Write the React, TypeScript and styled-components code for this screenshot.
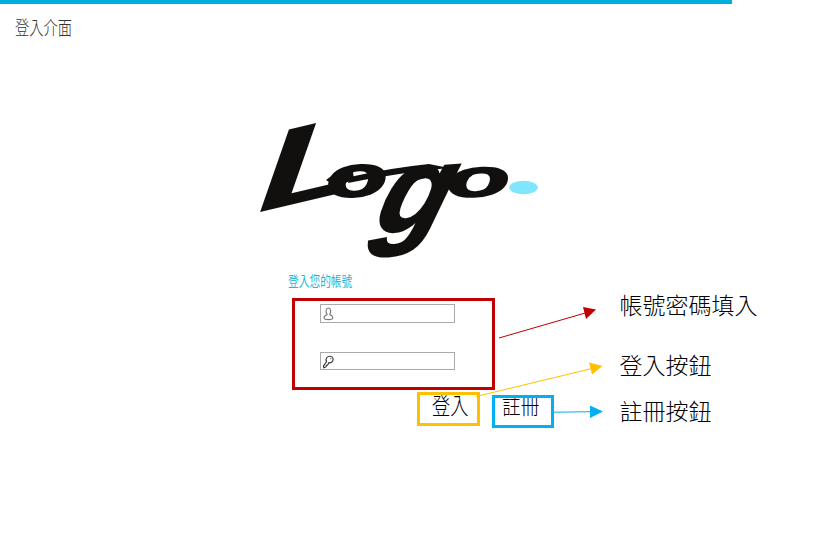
import React from 'react';
import styled, { createGlobalStyle } from 'styled-components';

const GlobalStyle = createGlobalStyle`
  * { box-sizing: border-box; }
  body { margin: 0; background: #fff; overflow: hidden; }
`;

const Page = styled.main`
  position: relative;
  width: 823px;
  height: 560px;
  background: #fff;
  color: #000;
  font-family: "Noto Sans CJK TC", sans-serif;
  font-weight: 300;
`;

const TopBar = styled.div`
  width: 732px;
  height: 4px;
  background: #00aedb;
`;

const Line = styled.span<{ $size: number; $squeeze: number }>`
  display: block;
  width: max-content;
  margin: 0;
  font-size: ${p => p.$size}px;
  font-weight: inherit;
  line-height: 24px;
  white-space: nowrap;
  transform: scaleX(${p => p.$squeeze});
  transform-origin: 0 50%;
`;

const Header = styled.header`
  height: 116px;
  padding: 11px 0 0 15px;
  color: #333;
`;

const Logo = styled.svg`
  display: block;
  width: 290px;
  height: 146px;
  margin-left: 255px;
  overflow: visible;
`;

const Content = styled.div`
  display: flex;
  align-items: flex-start;
`;

const LoginPanel = styled.section`
  width: 619.5px;
  padding: 3px 0 0 287.5px;
`;

const Prompt = styled.div`
  height: 29px;
  color: #20b7dc;
  font-weight: 400;

  ${Line} { line-height: 22px; }
`;

const FieldGroup = styled.div`
  display: flex;
  flex-direction: column;
  gap: 29px;
  width: 203px;
  height: 92px;
  margin-left: 4.5px;
  padding: 3px 0 0 25px;
  border: 3px solid #c00000;
`;

const Field = styled.label`
  display: flex;
  align-items: center;
  flex: none;
  width: 135px;
  height: 18.5px;
  padding-left: 1px;
  border: 1px solid #aaa;
`;

const FieldIcon = styled.svg`
  flex: none;
  width: 13px;
  height: 14px;
  margin-top: 2px;
  fill: none;
  stroke-width: 1.1;
`;

const Input = styled.input`
  width: 110px;
  height: 14px;
  padding: 0;
  border: 0;
  outline: 0;
  background: transparent;
`;

const Actions = styled.div`
  display: flex;
  gap: 12px;
  margin: 2px 0 0 129.5px;
`;

const ActionButton = styled.button<{ $color: string; $top: number; $width: number; $height: number; $left: number; $lift: number }>`
  position: relative;
  display: flex;
  align-items: flex-start;
  flex: none;
  width: ${p => p.$width}px;
  height: ${p => p.$height}px;
  margin: ${p => p.$top}px 0 0;
  padding: 0 0 0 ${p => p.$left}px;
  border: 0;
  background: none;
  color: #000;
  font: inherit;

  ${Line} { margin-top: -${p => p.$lift}px; }

  &::after {
    content: "";
    position: absolute;
    inset: 0;
    border: 3px solid ${p => p.$color};
  }
`;

const Notes = styled.aside`
  display: flex;
  flex-direction: column;
  padding-top: 26px;
`;

const Note = styled.div<{ $height: number }>`
  height: ${p => p.$height}px;
`;

const Arrows = styled.svg`
  position: absolute;
  left: 0;
  top: 0;
  width: 823px;
  height: 560px;
  pointer-events: none;
`;

const LogoMark = () => (
  <Logo viewBox="255 120 290 146" role="img" aria-label="Logo" fill="#11100e">
    <g fontFamily="Liberation Sans" fontStyle="italic" fontWeight="700" fontSize="100">
      <text fontFamily="Lato" fontWeight="700" transform="matrix(2.1 -0.5 -0.14 1.08 252 214)">L</text>
      <text stroke="#11100e" strokeWidth="3" transform="matrix(1 -0.04 0.02 0.58 327 197.5)">o</text>
      <text stroke="#11100e" strokeWidth="2" transform="matrix(1.16 -0.08 -0.36 1.2 372 233)">g</text>
      <text stroke="#11100e" strokeWidth="3" transform="matrix(1.04 -0.04 0.02 0.53 447 197.5)">o</text>
    </g>
    <path d="M326 180Q338 170 352 166L354 179L337 187Z" />
    <path d="M350 177Q390 168 429 164L449 168L420 171Q377 177 348 183Z" />
    <path d="M443 182Q456 174 473 170L472 176Q460 179 446 187Z" />
    <ellipse cx="523.5" cy="187.5" rx="14.3" ry="6.8" fill="#80e5ff" />
  </Logo>
);

export default function App() {
  return (
    <>
      <GlobalStyle />
      <Page>
        <TopBar />
        <Header><Line as="h1" $size={19} $squeeze={0.75}>登入介面</Line></Header>
        <LogoMark />
        <Content>
          <LoginPanel>
            <Prompt><Line $size={14} $squeeze={0.765}>登入您的帳號</Line></Prompt>
            <FieldGroup>
              <Field>
                <FieldIcon viewBox="0 0 13 14" stroke="#777">
                  <path d="M5 6.8C3.4 5.2 3.8 1 6.4 1S9.4 5.2 7.8 6.8V7.8C9.6 8.3 10.8 9.5 10.8 11C10.8 13.1 2 13.1 2 11C2 9.5 3.2 8.3 5 7.8Z" />
                </FieldIcon>
                <Input aria-label="帳號" />
              </Field>
              <Field>
                <FieldIcon viewBox="0 0 13 14" stroke="#333">
                  <path d="M4.6 6.5C3 3.5 5.2 1.2 8 1.2C10.6 1.2 11.8 3.6 10.8 5.8C10 7.7 8.2 8 6.8 7.7L5.6 10L4.4 10.5L4 11.8L1.8 12.8L1.4 11.2Z" />
                  <path d="M8.3 3.8h1" />
                </FieldIcon>
                <Input type="password" aria-label="密碼" />
              </Field>
            </FieldGroup>
            <Actions>
              <ActionButton $color="#ffc000" $top={0} $width={63} $height={34} $left={15} $lift={0}>
                <Line $size={23} $squeeze={0.79}>登入</Line>
              </ActionButton>
              <ActionButton $color="#00b0f0" $top={3} $width={62} $height={33} $left={10} $lift={3}>
                <Line $size={23} $squeeze={0.81}>註冊</Line>
              </ActionButton>
            </Actions>
          </LoginPanel>
          <Notes>
            <Note $height={60}><Line $size={23} $squeeze={1}>帳號密碼填入</Line></Note>
            <Note $height={46}><Line $size={23} $squeeze={1}>登入按鈕</Line></Note>
            <Note $height={30}><Line $size={23} $squeeze={1}>註冊按鈕</Line></Note>
          </Notes>
        </Content>
        <Arrows aria-hidden="true">
          <g stroke="#c00000" fill="#c00000"><path d="M499 338L587 312.5" /><path d="M583 307L596 309.5L586 319Z" stroke="none" /></g>
          <g stroke="#ffc000" fill="#ffc000"><path d="M476 396.5L592 368.5" /><path d="M589 362.5L602.5 366L592 374.5Z" stroke="none" /></g>
          <g stroke="#00b0f0" fill="#00b0f0"><path d="M554 412.2L592 411.7" /><path d="M590 405.5L603 411.5L590 418Z" stroke="none" /></g>
        </Arrows>
      </Page>
    </>
  );
}
